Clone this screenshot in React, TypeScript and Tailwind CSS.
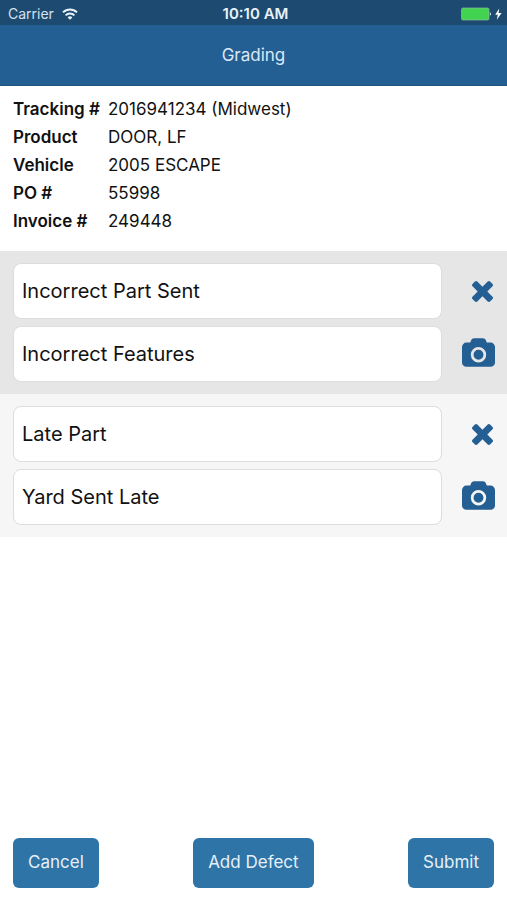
import React from 'react';

interface Defect {
  id: number;
  reason: string;
  detail: string;
}

const details = [
  { label: 'Tracking #', value: '2016941234 (Midwest)' },
  { label: 'Product', value: 'DOOR, LF' },
  { label: 'Vehicle', value: '2005 ESCAPE' },
  { label: 'PO #', value: '55998' },
  { label: 'Invoice #', value: '249448' },
];

const defects: Defect[] = [
  { id: 1, reason: 'Incorrect Part Sent', detail: 'Incorrect Features' },
  { id: 2, reason: 'Late Part', detail: 'Yard Sent Late' },
];

const WifiIcon = () => (
  <svg viewBox="0 0 16 12" className="h-3 w-4" fill="none" stroke="#eaf2f9" strokeWidth="2" aria-hidden="true">
    <path d="M1 4.4a10 10 0 0 1 14 0" />
    <path d="M3.6 7.4a6.2 6.2 0 0 1 8.8 0" />
    <path d="M8 11.8 5.6 9.4a3.4 3.4 0 0 1 4.8 0z" fill="#eaf2f9" stroke="none" />
  </svg>
);

const BatteryIcon = () => (
  <svg viewBox="0 0 42 14" className="h-3.5 w-[42px]" aria-hidden="true">
    <rect x="0.5" y="1" width="27.5" height="12" rx="1.5" fill="#42d451" stroke="#8fb7a8" strokeWidth="0.7" />
    <path d="M28.9 5.2a2 2 0 0 1 0 3.6z" fill="#dce8f2" />
    <path d="M38.2 1.4 34.2 7.7h2.6l-1 5 4.8-6.7h-3z" fill="#fff" />
  </svg>
);

const CloseIcon = () => (
  <svg viewBox="302 366 1188 1188" className="h-[21px] w-[21px]" fill="currentColor" aria-hidden="true">
    <path d="M1490 1322q0 40-28 68l-136 136q-28 28-68 28t-68-28l-294-294-294 294q-28 28-68 28t-68-28l-136-136q-28-28-28-68t28-68l294-294-294-294q-28-28-28-68t28-68l136-136q28-28 68-28t68 28l294 294 294-294q28-28 68-28t68 28l136 136q28 28 28 68t-28 68l-294 294 294 294q28 28 28 68z" />
  </svg>
);

const CameraIcon = () => (
  <svg viewBox="-64 0 1920 1664" className="h-[29px] w-[33px]" fill="currentColor" aria-hidden="true">
    <path d="M896 672q119 0 203.5 84.5t84.5 203.5-84.5 203.5-203.5 84.5-203.5-84.5-84.5-203.5 84.5-203.5 203.5-84.5zm704-416q106 0 181 75t75 181v896q0 106-75 181t-181 75h-1408q-106 0-181-75t-75-181v-896q0-106 75-181t181-75h224l51-136q19-49 69.5-84.5t103.5-35.5h512q53 0 103.5 35.5t69.5 84.5l51 136h224zm-704 1152q185 0 316.5-131.5t131.5-316.5-131.5-316.5-316.5-131.5-316.5 131.5-131.5 316.5 131.5 316.5 316.5 131.5z" />
  </svg>
);

function DefectSelect({ label, value }: { label: string; value: string }) {
  return (
    <select
      aria-label={label}
      defaultValue={value}
      className="h-14 min-w-0 flex-1 appearance-none rounded-lg border border-[#dddddd] bg-white px-2 text-xl text-[#111111]"
    >
      <option value={value}>{value}</option>
    </select>
  );
}

function DefectRow({ defect }: { defect: Defect }) {
  return (
    <section className="flex flex-col gap-[7px] py-3 pr-3 pl-[13px] odd:bg-[#e6e6e6] even:bg-[#f6f6f6]">
      <div className="flex items-center">
        <DefectSelect label="Defect" value={defect.reason} />
        <button type="button" aria-label="Remove defect" className="flex w-[53px] justify-end pr-0.5 text-[#245f94]">
          <CloseIcon />
        </button>
      </div>
      <div className="flex items-center">
        <DefectSelect label="Defect detail" value={defect.detail} />
        <button type="button" aria-label="Take photo" className="flex w-[53px] justify-end pb-1 text-[#245f94]">
          <CameraIcon />
        </button>
      </div>
    </section>
  );
}

function ActionButton({ children }: { children: React.ReactNode }) {
  return (
    <button type="button" className="h-[50px] rounded-md bg-[#2e74a7] px-[15px] text-[17px] text-[#e6f0f8]">
      {children}
    </button>
  );
}

export default function App() {
  return (
    <div className="flex min-h-screen flex-col bg-white font-['Inter',sans-serif] text-[#111111]">
      {/* Status bar */}
      <div className="grid h-[25px] grid-cols-3 items-center bg-[#1d4a70] pt-0.5 pr-1 pl-2 text-sm text-[#d5e2ed]">
        <div className="flex items-center gap-2">
          <span>Carrier</span>
          <WifiIcon />
        </div>
        <span className="text-center text-[15px] font-semibold text-[#eaf2f9]">10:10 AM</span>
        <div className="flex justify-end">
          <BatteryIcon />
        </div>
      </div>

      <header className="flex h-[61px] items-center justify-center border-b border-[#1d5484] bg-[#245f94] pt-0.5">
        <h1 className="text-[17px] text-[#dce9f4]">Grading</h1>
      </header>

      <dl className="grid grid-cols-[95px_1fr] px-[13px] pt-[9px] pb-4 text-[17px] leading-7">
        {details.map((item) => (
          <React.Fragment key={item.label}>
            <dt className="font-semibold whitespace-nowrap">{item.label}</dt>
            <dd>{item.value}</dd>
          </React.Fragment>
        ))}
      </dl>

      <main>
        {defects.map((defect) => (
          <DefectRow key={defect.id} defect={defect} />
        ))}
      </main>

      <footer className="mt-auto flex justify-between px-[13px] py-3">
        <ActionButton>Cancel</ActionButton>
        <ActionButton>Add Defect</ActionButton>
        <ActionButton>Submit</ActionButton>
      </footer>
    </div>
  );
}
